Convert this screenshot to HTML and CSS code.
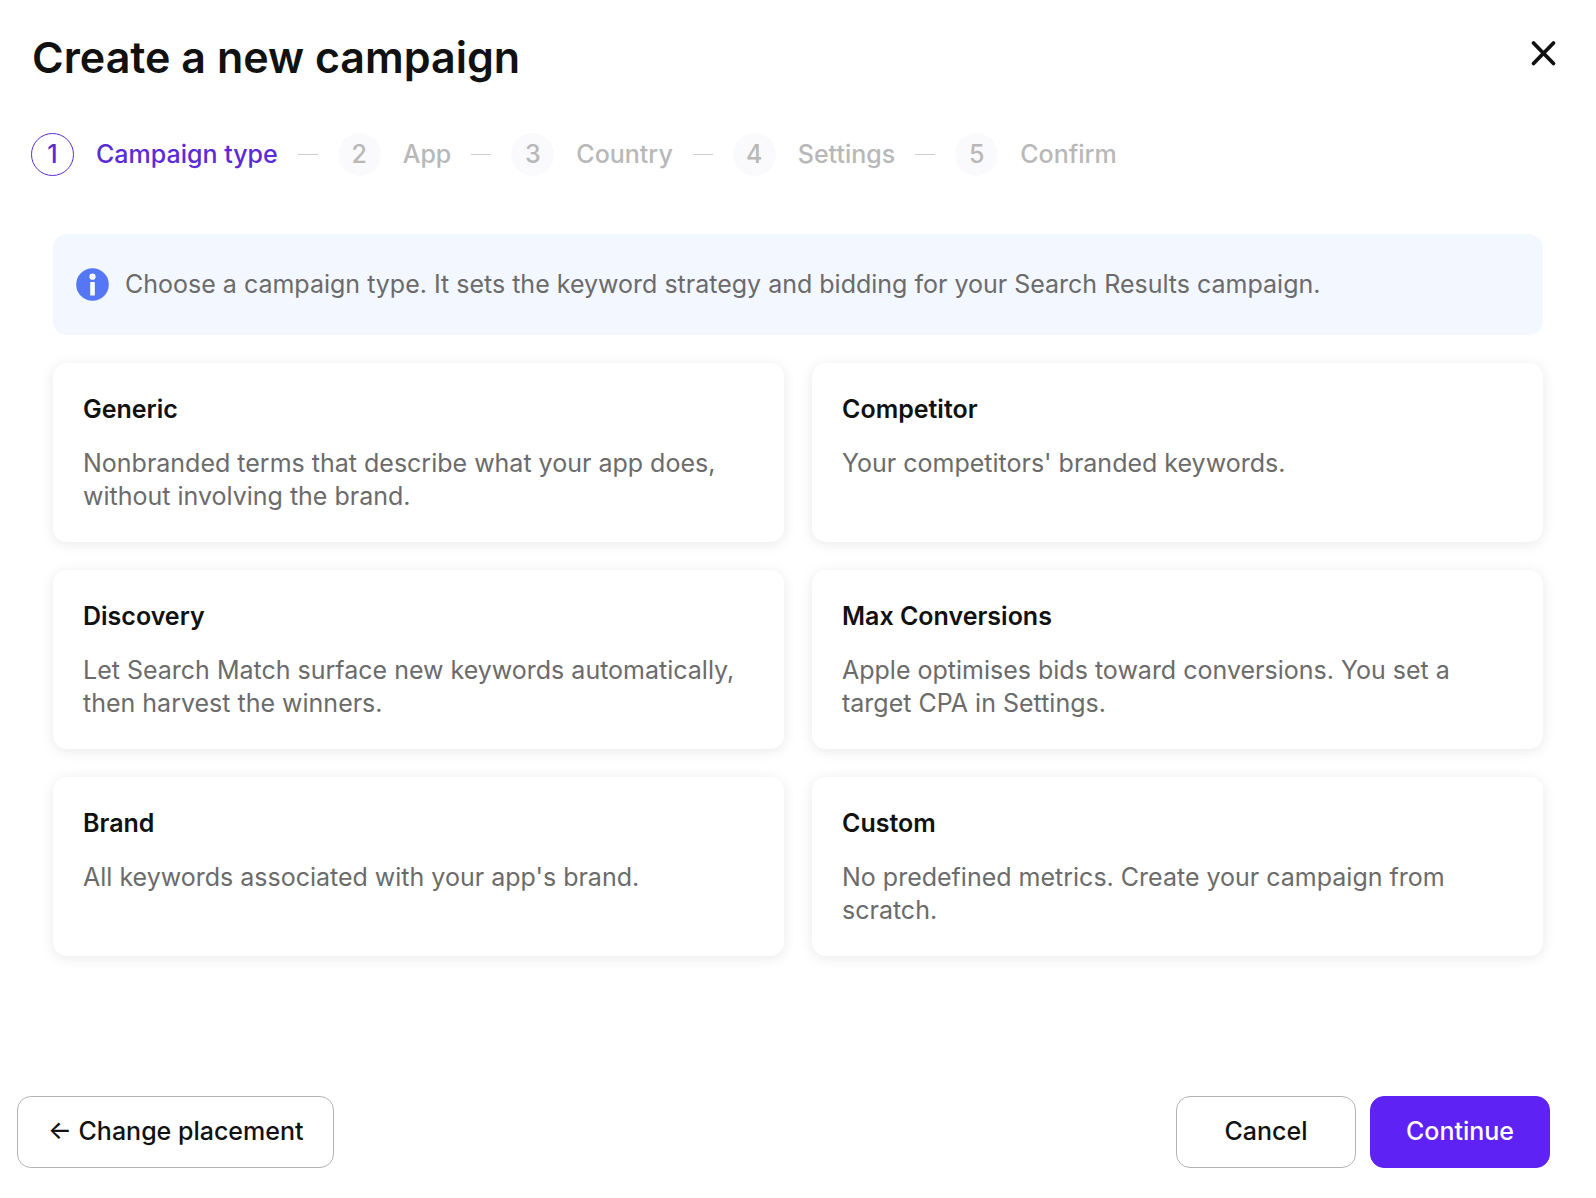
FILE: index.html
```html
<!DOCTYPE html>
<html lang="en">
<head>
<meta charset="utf-8">
<meta name="viewport" content="width=device-width, initial-scale=1">
<title>Create a new campaign</title>
<link rel="stylesheet" href="styles.css">
</head>
<body>
<main class="dialog">
  <header class="header">
    <h1 class="title">Create a new campaign</h1>
    <button class="close" type="button" aria-label="Close">
      <svg viewBox="0 0 28 28" width="28" height="28" fill="none" stroke="currentColor" stroke-width="3.8" stroke-linecap="round" aria-hidden="true"><path d="M3.5 3L23.5 23.5M23.5 3L3.5 23.5"/></svg>
    </button>
  </header>

  <ol class="steps">
    <li class="step step-current" aria-current="step"><span class="step-number">1</span><span>Campaign type</span></li>
    <li class="step"><span class="step-number">2</span><span>App</span></li>
    <li class="step"><span class="step-number">3</span><span>Country</span></li>
    <li class="step"><span class="step-number">4</span><span>Settings</span></li>
    <li class="step"><span class="step-number">5</span><span>Confirm</span></li>
  </ol>

  <div class="content">
    <div class="notice">
      <svg class="notice-icon" viewBox="0 0 33 33" width="33" height="33" aria-hidden="true"><circle cx="16.5" cy="16.5" r="16.3" fill="#5577f5"/><circle cx="16.5" cy="8.7" r="3.1" fill="#fff"/><rect x="14.2" y="14" width="4.6" height="13.6" rx="0.6" fill="#fff"/></svg>
      <p>Choose a campaign type. It sets the keyword strategy and bidding for your Search Results campaign.</p>
    </div>

    <div class="cards">
      <button class="card" type="button"><span class="card-title">Generic</span><span class="card-text">Nonbranded terms that describe what your app does, without involving the brand.</span></button>
      <button class="card" type="button"><span class="card-title">Competitor</span><span class="card-text">Your competitors' branded keywords.</span></button>
      <button class="card" type="button"><span class="card-title">Discovery</span><span class="card-text">Let Search Match surface new keywords automatically, then harvest the winners.</span></button>
      <button class="card" type="button"><span class="card-title">Max Conversions</span><span class="card-text">Apple optimises bids toward conversions. You set a target CPA in Settings.</span></button>
      <button class="card" type="button"><span class="card-title">Brand</span><span class="card-text">All keywords associated with your app's brand.</span></button>
      <button class="card" type="button"><span class="card-title">Custom</span><span class="card-text">No predefined metrics. Create your campaign from scratch.</span></button>
    </div>
  </div>

  <footer class="footer">
    <button class="button button-back" type="button">← Change placement</button>
    <button class="button" type="button">Cancel</button>
    <button class="button button-primary" type="button">Continue</button>
  </footer>
</main>
</body>
</html>
```
FILE: styles.css
```css
* {
  box-sizing: border-box;
}

body {
  margin: 0;
  background: #fff;
  color: #111;
  font-family: Inter, "Liberation Sans", sans-serif;
  font-size: 25px;
  line-height: 33px;
}

button {
  font: inherit;
  color: inherit;
  cursor: pointer;
}

.dialog {
  display: flex;
  flex-direction: column;
  min-height: 100vh;
}

.header {
  display: flex;
  justify-content: space-between;
  align-items: flex-start;
  padding: 30px 38px 0 32px;
}

.title {
  margin: 0;
  font-size: 43px;
  font-weight: 600;
  line-height: 54px;
}

.close {
  display: flex;
  margin-top: 10px;
  padding: 0;
  border: 0;
  background: none;
}

.steps {
  display: flex;
  flex-wrap: wrap;
  gap: 20px;
  margin: 0;
  padding: 49px 31px 0;
  list-style: none;
}

.step {
  display: flex;
  align-items: center;
  gap: 22px;
  color: #b8b8b8;
  font-weight: 500;
}

.step:not(:last-child)::after {
  content: "";
  width: 20px;
  height: 1px;
  margin-left: -2px;
  background: #ccc;
}

.step-number {
  display: flex;
  align-items: center;
  justify-content: center;
  width: 43px;
  height: 43px;
  border-radius: 50%;
  background: #fafafc;
}

.step-current {
  color: #5b2bd6;
}

.step-current .step-number {
  border: 1px solid #5b2bd6;
  background: #fff;
}

.content {
  padding: 58px 53px;
}

.notice {
  display: flex;
  align-items: center;
  gap: 16px;
  padding: 34px 23px;
  border-radius: 14px;
  background: #f3f7ff;
  color: #6b6b6b;
}

.notice p {
  margin: 0;
}

.notice-icon {
  flex: none;
}

.cards {
  display: grid;
  grid-template-columns: 1fr 1fr;
  gap: 28px;
  margin-top: 28px;
}

.card {
  display: flex;
  flex-direction: column;
  gap: 22px;
  min-height: 179px;
  padding: 30px 30px 29px;
  border: 0;
  border-radius: 14px;
  background: #fff;
  box-shadow: 0 2px 14px rgba(0, 0, 0, 0.09);
  text-align: left;
}

.card-title {
  font-weight: 600;
  line-height: 32px;
}

.card-text {
  color: #6b6b6b;
}

.footer {
  display: flex;
  gap: 14px;
  margin-top: auto;
  padding: 0 46px 30px 17px;
}

.button {
  min-width: 180px;
  height: 72px;
  padding: 0 30px 2px;
  border: 1px solid #b4b4b4;
  border-radius: 14px;
  background: #fff;
  font-weight: 500;
}

.button-back {
  margin-right: auto;
}

.button-primary {
  border-color: #5f22f5;
  background: #5f22f5;
  color: #fff;
}
```
